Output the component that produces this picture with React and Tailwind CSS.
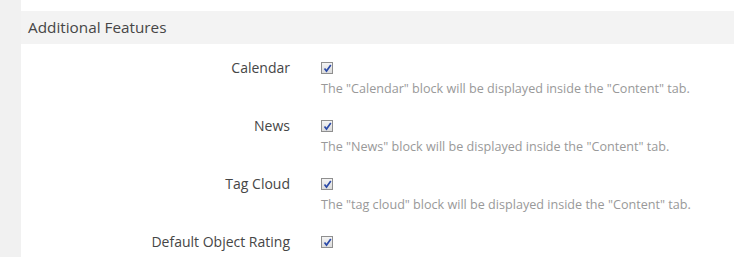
const features = [
  { label: "Calendar", desc: 'The "Calendar" block will be displayed inside the "Content" tab.' },
  { label: "News", desc: 'The "News" block will be displayed inside the "Content" tab.' },
  { label: "Tag Cloud", desc: 'The "tag cloud" block will be displayed inside the "Content" tab.' },
  { label: "Default Object Rating" },
];

function Check() {
  return (
    <span className="flex h-[12px] w-[12px] items-center justify-center border border-[#8f8f8f] bg-gradient-to-b from-[#f4f4f4] to-[#dcdcdc]">
      <svg width="9" height="9" viewBox="0 0 9 9">
        <path d="M1.5 4.5 L3.5 7 L7.8 1" fill="none" stroke="#2b4aa8" strokeWidth="1.7" />
      </svg>
    </span>
  );
}

export default function App() {
  return (
    <div
      className="min-h-[257px] w-[734px] bg-[#f1f1f1] pl-[21px] text-[#464646]"
      style={{ fontFamily: '"Open Sans", sans-serif' }}
    >
      <div className="min-h-[257px] bg-white pt-[11px]">
        {/* Section header */}
        <div className="flex h-[33px] items-center bg-[#f3f3f3] px-[7px] text-[15.3px]">
          Additional Features
        </div>

        <div className="flex flex-col gap-[20px] pt-[15px]">
          {features.map((f) => (
            <div key={f.label} className="flex items-start">
              <div className="w-[269px] text-right text-[14px] leading-[18px]">{f.label}</div>
              <div className="pl-[31px]">
                <div className="flex h-[18px] items-center">
                  <Check />
                </div>
                {f.desc && (
                  <div className="mt-[3px] text-[12.6px] leading-[17px] text-[#999]">{f.desc}</div>
                )}
              </div>
            </div>
          ))}
        </div>
      </div>
    </div>
  );
}
